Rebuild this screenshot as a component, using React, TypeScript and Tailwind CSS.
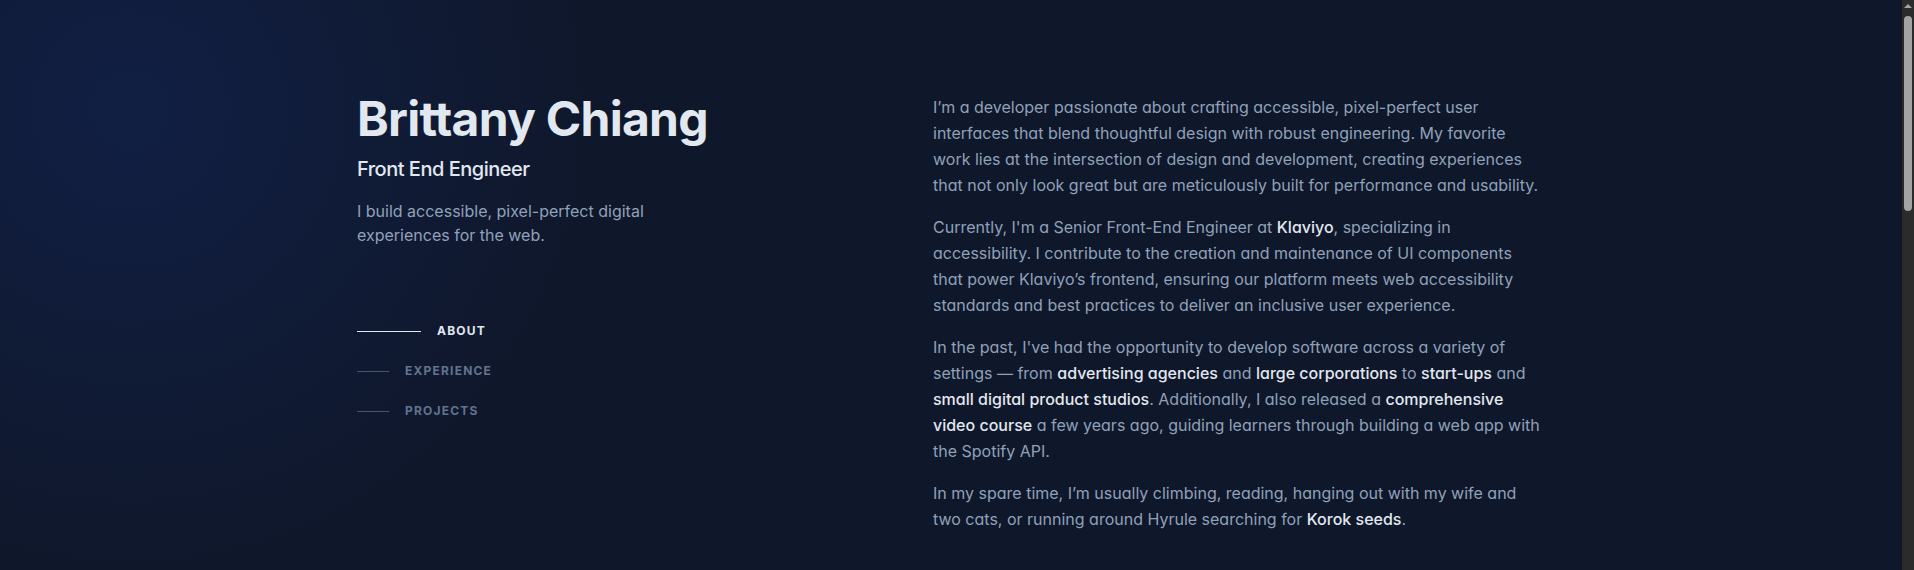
import React from "react";

function B({ children }: { children: React.ReactNode }) {
  return <span className="font-medium text-slate-200">{children}</span>;
}

function NavItem({ label, active }: { label: string; active?: boolean }) {
  return (
    <li>
      <a className="flex items-center py-3" href={"#" + label.toLowerCase()}>
        <span className={active ? "mr-4 h-px w-16 bg-slate-200" : "mr-4 h-px w-8 bg-slate-600"} />
        <span
          className={
            active
              ? "text-xs font-bold uppercase tracking-widest text-slate-200"
              : "text-xs font-bold uppercase tracking-widest text-slate-500"
          }
        >
          {label}
        </span>
      </a>
    </li>
  );
}

export default function App() {
  return (
    <div className="flex h-[570px] w-full overflow-hidden bg-[#0f172a] bg-[radial-gradient(600px_at_130px_110px,rgba(29,78,216,0.15),transparent_80%)] font-['Inter',sans-serif] antialiased">
      <div className="flex-1">
        <div className="mx-auto flex w-[1188px]">
          <header className="w-[576px] shrink-0 pt-[95px]">
            <h1 className="text-5xl font-bold leading-none tracking-[-0.75px] text-slate-200">Brittany Chiang</h1>
            <h2 className="mt-3 text-xl font-medium leading-7 tracking-tight text-slate-200">Front End Engineer</h2>
            <p className="mt-4 max-w-xs text-base leading-normal text-slate-400">
              I build accessible, pixel-perfect digital experiences for the web.
            </p>
            <nav>
              <ul className="mt-16 w-max">
                <NavItem label="About" active />
                <NavItem label="Experience" />
                <NavItem label="Projects" />
              </ul>
            </nav>
          </header>
          <main className="w-[606px] shrink-0 pt-[94px] text-base leading-[26px] text-slate-400 [font-feature-settings:'cv11']">
            <p className="mb-4">
              I’m a developer passionate about crafting accessible, pixel-perfect user interfaces that blend
              thoughtful design with robust engineering. My favorite work lies at the intersection of design and
              development, creating experiences that not only look great but are meticulously built for performance
              and usability.
            </p>
            <p className="mb-4">
              Currently, I'm a Senior Front-End Engineer at <B>Klaviyo</B>, specializing in accessibility. I
              contribute to the creation and maintenance of UI components that power Klaviyo’s frontend, ensuring our
              platform meets web accessibility standards and best practices to deliver an inclusive user experience.
            </p>
            <p className="mb-4 whitespace-nowrap">
              In the past, I've had the opportunity to develop software across a variety of
              <br />
              settings — from <B>advertising agencies</B> and <B>large corporations</B> to <B>start-ups</B> and
              <br />
              <B>small digital product studios</B>. Additionally, I also released a <B>comprehensive</B>
              <br />
              <B>video course</B> a few years ago, guiding learners through building a web app with
              <br />
              the Spotify API.
            </p>
            <p className="mb-4">
              In my spare time, I’m usually climbing, reading, hanging out with my wife and two cats, or running around
              Hyrule searching for <B>Korok seeds</B>.
            </p>
          </main>
        </div>
      </div>
      <div className="flex w-3 shrink-0 flex-col items-center bg-[#2b2b2b]">
        <div className="mt-1 h-0 w-0 border-x-4 border-b-4 border-x-transparent border-b-[#a3a3a3]" />
        <div className="mt-2 h-[195px] w-2 rounded-full bg-[#a3a3a3]" />
      </div>
    </div>
  );
}
